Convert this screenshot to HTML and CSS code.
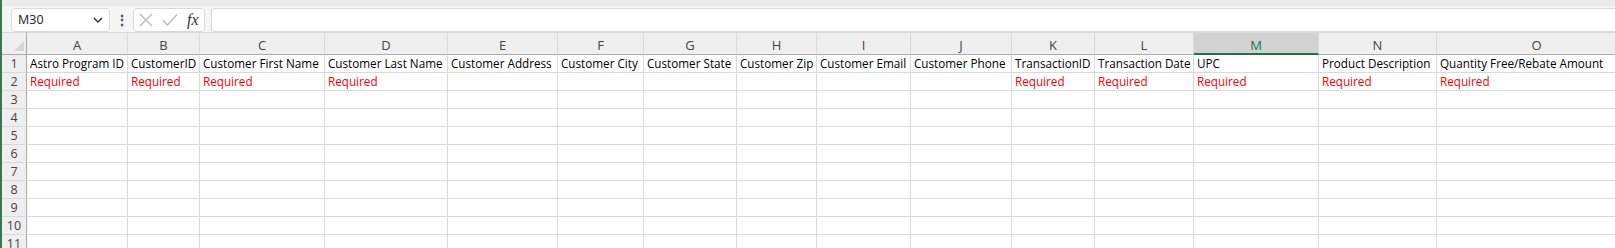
FILE: index.html
```html
<!DOCTYPE html>
<html lang="en">
<head>
  <meta charset="utf-8">
  <title>Sheet</title>
  <link rel="stylesheet" href="styles.css">
</head>
<body>
  <!-- Formula bar -->
  <div class="toolbar">
    <div class="name-box">
      <span>M30</span>
      <svg class="chevron" width="10" height="6" viewBox="0 0 10 6"><path d="M1 1 L5 5 L9 1" fill="none" stroke="#333" stroke-width="1.4"/></svg>
    </div>
    <div class="dots">&#8942;</div>
    <div class="fx-box">
      <svg width="14" height="14" viewBox="0 0 14 14"><path d="M1 1 L13 13 M13 1 L1 13" stroke="#b8b8b8" stroke-width="1.2"/></svg>
      <svg width="16" height="14" viewBox="0 0 16 14"><path d="M1 7 L5.5 12 L15 1.5" fill="none" stroke="#b8b8b8" stroke-width="1.2"/></svg>
      <span class="fx">fx</span>
    </div>
    <div class="formula-input"></div>
  </div>

  <!-- Grid -->
  <div class="sheet head">
    <div class="corner"><span class="tri"></span></div>
    <div class="col-hdr">A</div>
    <div class="col-hdr">B</div>
    <div class="col-hdr">C</div>
    <div class="col-hdr">D</div>
    <div class="col-hdr">E</div>
    <div class="col-hdr">F</div>
    <div class="col-hdr">G</div>
    <div class="col-hdr">H</div>
    <div class="col-hdr">I</div>
    <div class="col-hdr">J</div>
    <div class="col-hdr">K</div>
    <div class="col-hdr">L</div>
    <div class="col-hdr selected">M</div>
    <div class="col-hdr">N</div>
    <div class="col-hdr">O</div>

    <div class="row-hdr">1</div>
    <div class="cell">Astro Program ID</div>
    <div class="cell">CustomerID</div>
    <div class="cell">Customer First Name</div>
    <div class="cell">Customer Last Name</div>
    <div class="cell">Customer Address</div>
    <div class="cell">Customer City</div>
    <div class="cell">Customer State</div>
    <div class="cell">Customer Zip</div>
    <div class="cell">Customer Email</div>
    <div class="cell">Customer Phone</div>
    <div class="cell">TransactionID</div>
    <div class="cell">Transaction Date</div>
    <div class="cell">UPC</div>
    <div class="cell">Product Description</div>
    <div class="cell">Quantity Free/Rebate Amount</div>

    <div class="row-hdr">2</div>
    <div class="cell req">Required</div>
    <div class="cell req">Required</div>
    <div class="cell req">Required</div>
    <div class="cell req">Required</div>
    <div class="cell"></div>
    <div class="cell"></div>
    <div class="cell"></div>
    <div class="cell"></div>
    <div class="cell"></div>
    <div class="cell"></div>
    <div class="cell req">Required</div>
    <div class="cell req">Required</div>
    <div class="cell req">Required</div>
    <div class="cell req">Required</div>
    <div class="cell req">Required</div>
  </div>
  <div class="sheet" id="empty-rows"></div>

  <script>
    // fill the empty rows 3..11
    var target = document.getElementById("empty-rows");
    for (var r = 3; r <= 11; r++) {
      var hdr = document.createElement("div");
      hdr.className = "row-hdr";
      hdr.textContent = r;
      target.appendChild(hdr);
      for (var c = 0; c < 15; c++) {
        var cell = document.createElement("div");
        cell.className = "cell";
        target.appendChild(cell);
      }
    }
  </script>
</body>
</html>
```

FILE: styles.css
```css
* {
  margin: 0;
  padding: 0;
  box-sizing: border-box;
}

body {
  background-color: #f3f3f3;
  font-family: 'Open Sans', 'Noto Sans', sans-serif;
  border-left: 2px solid #3b7556;
  height: 248px;
  overflow: hidden;
}

/* Formula bar */
.toolbar {
  display: flex;
  align-items: center;
  height: 32px;
  padding: 1px 0 0 9px;
  border-top: 6px solid #ebebeb;
  background-color: #f5f5f5;
}

.name-box {
  display: flex;
  align-items: center;
  justify-content: space-between;
  width: 99px;
  height: 24px;
  padding: 0 6px 0 6px;
  background-color: #fff;
  border: 1px solid #d9d9d9;
  border-radius: 4px;
  font-size: 12.5px;
  color: #222;
}

.dots {
  width: 23px;
  text-align: center;
  font-size: 14px;
  font-weight: bold;
  color: #444;
}

.fx-box {
  display: flex;
  align-items: center;
  gap: 9px;
  width: 72px;
  height: 24px;
  padding-left: 5px;
  background-color: #fff;
  border: 1px solid #d9d9d9;
  border-radius: 4px;
}

.fx {
  font-family: 'Liberation Serif', serif;
  font-style: italic;
  font-size: 16px;
  color: #333;
}

.formula-input {
  flex: 1;
  height: 24px;
  margin-left: 6px;
  background-color: #fff;
  border: 1px solid #d9d9d9;
  border-right: none;
  border-radius: 4px 0 0 4px;
}

/* Grid */
.sheet {
  display: grid;
  grid-template-columns: 25px 101px 72px 125px 123px 110px 86px 93px 80px 94px 101px 83px 99px 125px 118px 200px;
  grid-auto-rows: 18px;
  background-color: #fff;
}

.sheet.head {
  grid-template-rows: 23px 18px 18px;
}

.corner,
.col-hdr {
  background-color: #efefef;
  border-top: 1px solid #dadada;
  border-bottom: 1px solid #ababab;
}

.corner {
  position: relative;
  border-right: 1px solid #ababab;
}

.tri {
  position: absolute;
  right: 2px;
  bottom: 3px;
  width: 0;
  height: 0;
  border-left: 10px solid transparent;
  border-bottom: 10px solid #d6d6d6;
}

.col-hdr {
  border-right: 1px solid #d9d9d9;
  text-align: center;
  font-size: 13px;
  padding-top: 5px;
  line-height: 15px;
  color: #444;
}

.col-hdr.selected {
  background-color: #d2d2d2;
  border-bottom: 2px solid #217346;
  color: #217346;
}

.row-hdr {
  background-color: #efefef;
  border-right: 1px solid #ababab;
  border-bottom: 1px solid #d9d9d9;
  text-align: center;
  font-size: 12.5px;
  line-height: 18px;
  color: #444;
}

.cell {
  border-right: 1px solid #dadada;
  border-bottom: 1px solid #dadada;
  padding-left: 3px;
  font-size: 11.7px;
  line-height: 17px;
  color: #000;
  white-space: nowrap;
  overflow: hidden;
}

.cell.req {
  color: #ff0000;
}
```
